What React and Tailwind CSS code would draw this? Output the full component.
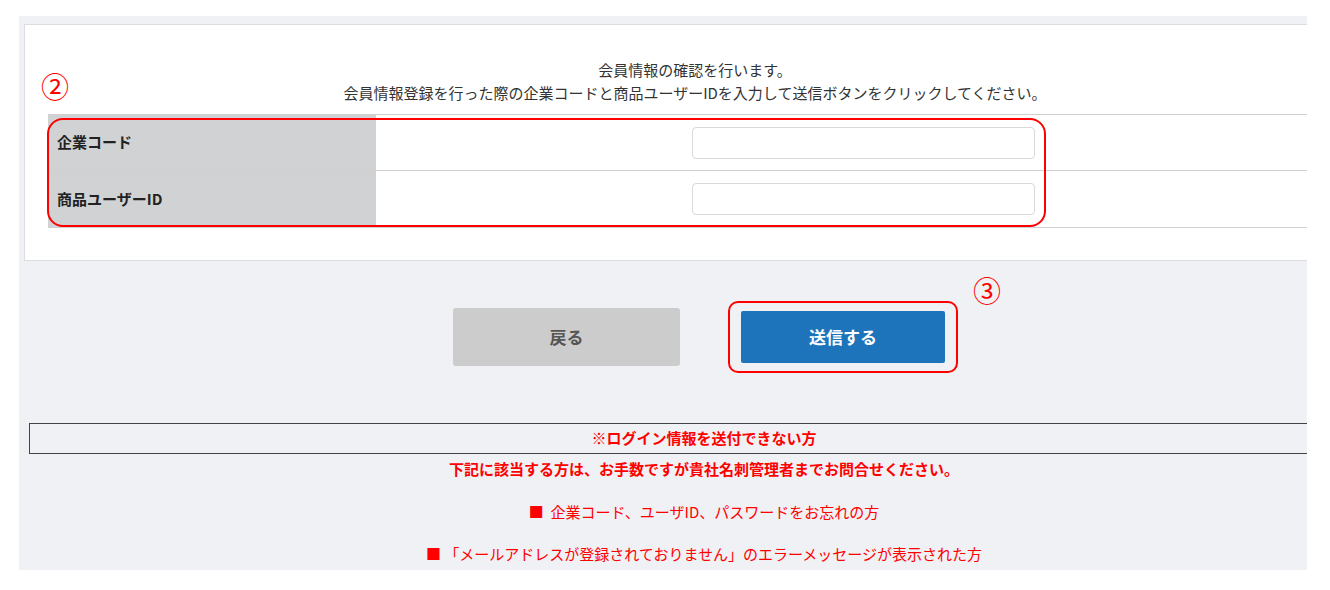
import React from 'react';

const font = { fontFamily: '"Noto Sans CJK JP", "Noto Sans", sans-serif' };

function Row({ label, last }) {
  return (
    <div className={'flex h-[56px] ' + (last ? '' : 'border-b border-[#d0d0d0]')}>
      <div className="w-[328px] bg-[#d1d2d4] flex items-center pl-[9px] text-[15px] font-bold text-[#222]">
        {label}
      </div>
      <div className="flex-1 flex items-center pl-[316px]">
        <input
          type="text"
          className="w-[343px] h-[32px] rounded-[4px] border border-[#d9d9d9] bg-white outline-none"
        />
      </div>
    </div>
  );
}

export default function App() {
  return (
    <div className="min-h-[590px] bg-white pt-[16px] pl-[19px]" style={font}>
      <div className="w-[1288px] h-[554px] overflow-hidden bg-[#f0f1f5]">
        <div className="w-[1360px] pt-[8px]">
          {/* Card */}
          <div className="relative ml-[5px] w-[1342px] bg-white border border-[#dcdde0] px-[23px] pt-[33px] pb-[32px]">
            <div className="text-center text-[15px] leading-[23px] text-[#333]">
              <p>会員情報の確認を行います。</p>
              <p>会員情報登録を行った際の企業コードと商品ユーザーIDを入力して送信ボタンをクリックしてください。</p>
            </div>
            <div className="mt-[10px] border-y border-[#d0d0d0]">
              <Row label="企業コード" />
              <Row label="商品ユーザーID" last />
            </div>
            <span className="absolute left-[16px] top-[47px] text-[28px] leading-none text-[#ff0000]">②</span>
            <div className="absolute left-[22px] top-[93px] w-[999px] h-[109px] border-2 border-[#ff0000] rounded-[16px]" />
          </div>

          {/* Buttons */}
          <div className="mt-[47px] flex justify-center items-center gap-[61px]">
            <button className="w-[227px] h-[58px] rounded-[3px] bg-[#cccccc] text-[17px] font-bold text-[#555]">
              戻る
            </button>
            <div className="relative">
              <button className="w-[204px] h-[52px] rounded-[2px] bg-[#1d74bb] text-[17px] font-bold text-white">
                送信する
              </button>
              <div className="absolute -left-[13px] -top-[10px] -right-[13px] -bottom-[10px] border-2 border-[#ff0000] rounded-[10px]" />
              <span className="absolute left-[232px] -top-[35px] text-[28px] leading-none text-[#ff0000]">③</span>
            </div>
          </div>

          {/* Notice */}
          <div className="mt-[57px] ml-[10px] w-[1350px]">
            <div className="h-[31px] border border-[#444] flex items-center justify-center text-[15px] font-bold text-[#ff0000]">
              ※ログイン情報を送付できない方
            </div>
            <p className="mt-[3px] text-center text-[15px] leading-[24px] font-bold text-[#ff0000]">
              下記に該当する方は、お手数ですが貴社名刺管理者までお問合せください。
            </p>
            <p className="mt-[19px] text-center text-[15px] leading-[24px] text-[#ff0000]">
              ■&nbsp;&nbsp;企業コード、ユーザID、パスワードをお忘れの方
            </p>
            <p className="mt-[18px] text-center text-[15px] leading-[24px] text-[#ff0000]">
              ■&nbsp;「メールアドレスが登録されておりません」のエラーメッセージが表示された方
            </p>
          </div>
        </div>
      </div>
    </div>
  );
}
